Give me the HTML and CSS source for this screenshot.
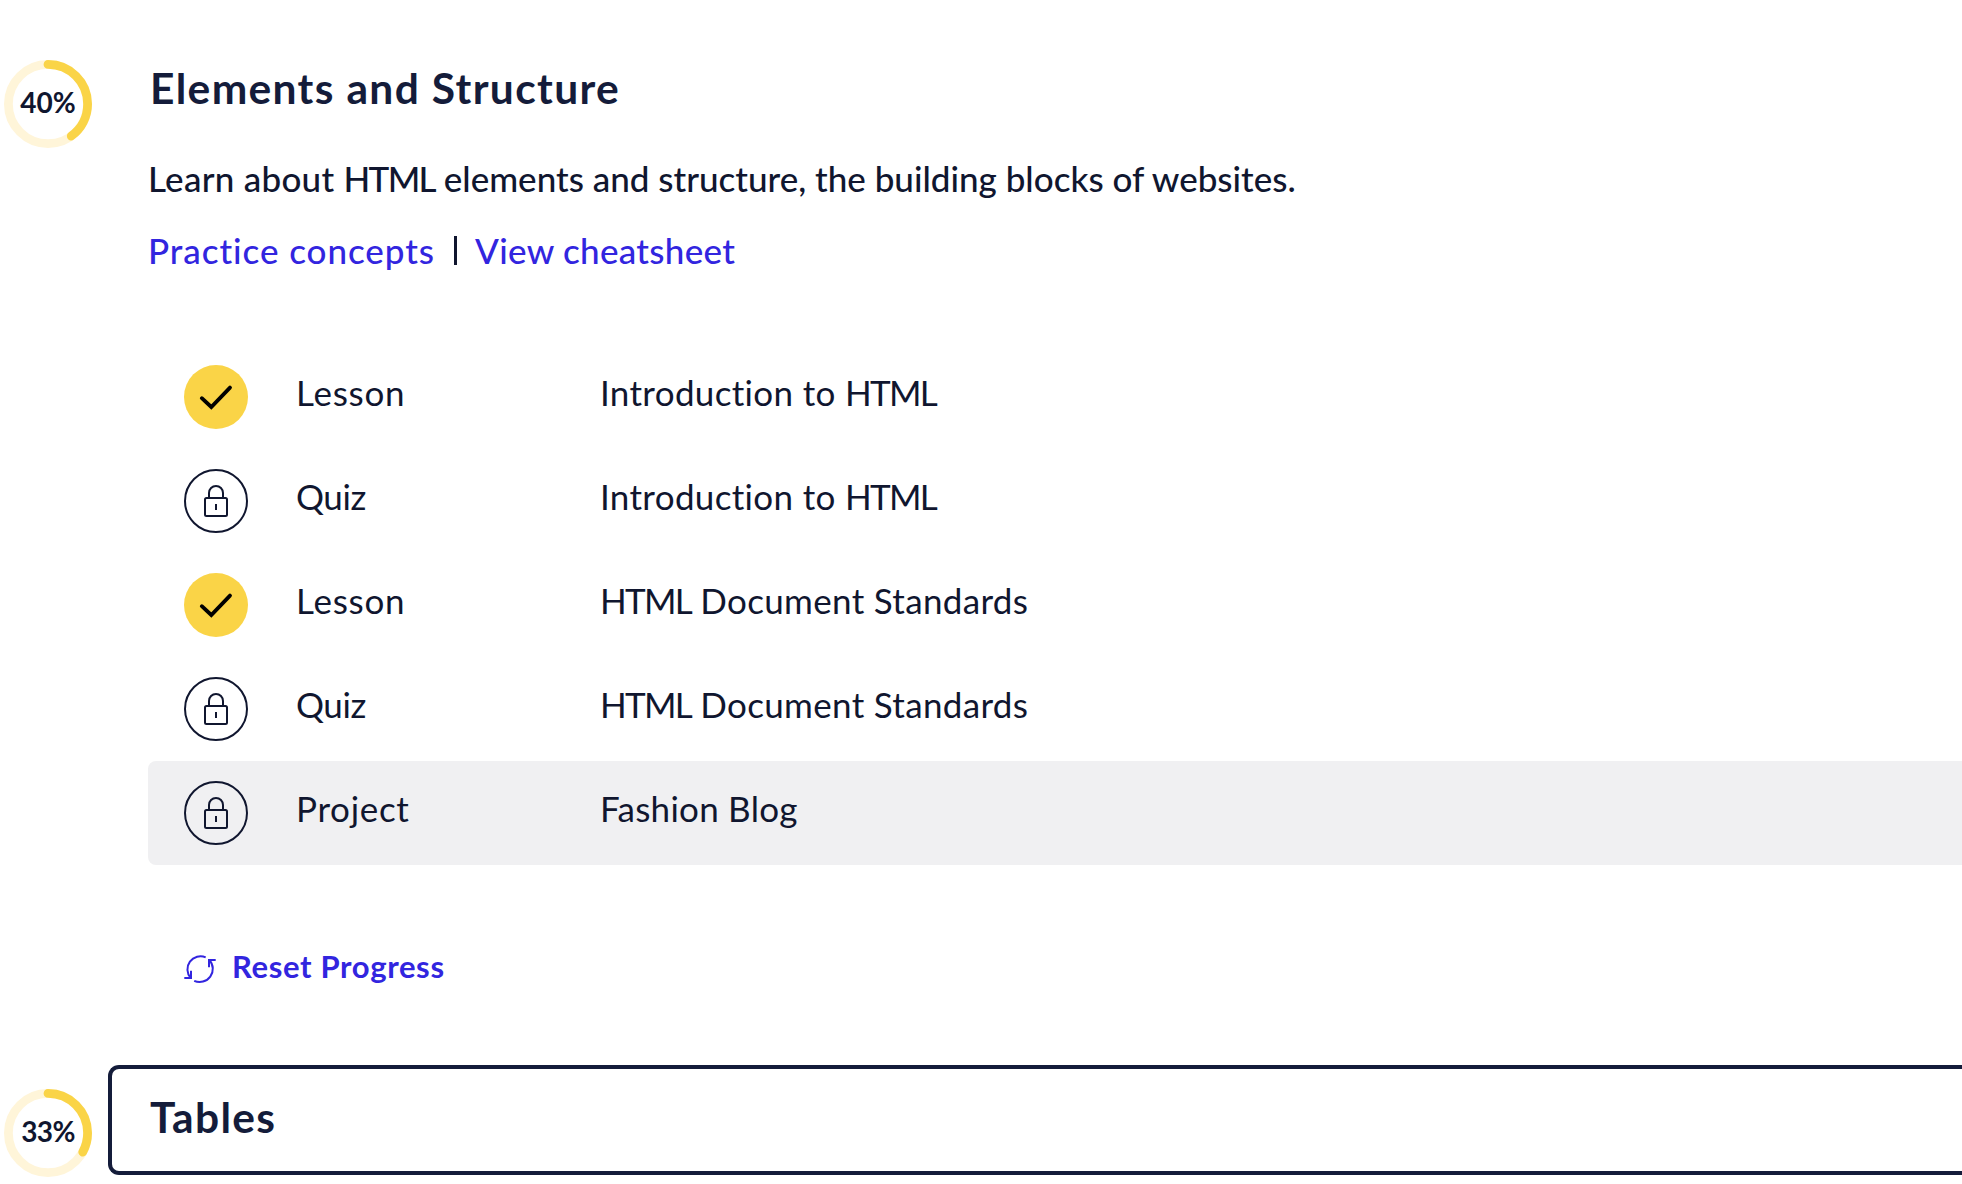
FILE: index.html
```html
<!DOCTYPE html>
<html lang="en">
<head>
<meta charset="utf-8">
<title>Learn HTML</title>
<link rel="stylesheet" href="styles.css">
</head>
<body>
<svg class="sprite" aria-hidden="true">
  <symbol id="check" viewBox="0 0 64 64">
    <circle cx="32" cy="32" r="32" fill="#fad447"/>
    <path d="M17.8 33.2 27.3 42 46 22.6" fill="none" stroke="#000" stroke-width="3.8" stroke-linecap="round" stroke-linejoin="miter"/>
  </symbol>
  <symbol id="lock" viewBox="0 0 64 64">
    <g fill="none" stroke="#10162f" stroke-width="2">
      <circle cx="32" cy="32" r="31"/>
      <rect x="21" y="29" width="22" height="18" rx="1.5"/>
      <path d="M25 29v-5a7 7 0 0 1 14 0v5M32 35v6"/>
    </g>
  </symbol>
</svg>

<main class="syllabus">
  <section class="module">
    <div class="progress">
      <svg class="ring" viewBox="0 0 88 88">
        <circle class="track" cx="44" cy="44" r="39.6"/>
        <circle class="value" cx="44" cy="44" r="39.6" pathLength="100" stroke-dasharray="40 100" transform="rotate(-90 44 44)"/>
      </svg>
      <span class="percent">40%</span>
    </div>
    <div class="content">
      <h2 class="title">Elements and Structure</h2>
      <p class="summary"><span class="lead">Learn about </span><span class="caps">HTML</span> elements and structure, the building blocks of websites.</p>
      <nav class="links"><a class="practice" href="#">Practice concepts</a><span class="divider"></span><a class="cheatsheet" href="#">View cheatsheet</a></nav>
      <ul class="items">
        <li class="item"><svg class="status"><use href="#check"/></svg><span class="kind lesson">Lesson</span><span class="name">Introduction to <span class="caps">HTML</span></span></li>
        <li class="item"><svg class="status"><use href="#lock"/></svg><span class="kind quiz">Quiz</span><span class="name">Introduction to <span class="caps">HTML</span></span></li>
        <li class="item"><svg class="status"><use href="#check"/></svg><span class="kind lesson">Lesson</span><span class="name"><span class="caps">HTML</span> Document Standards</span></li>
        <li class="item"><svg class="status"><use href="#lock"/></svg><span class="kind quiz">Quiz</span><span class="name"><span class="caps">HTML</span> Document Standards</span></li>
        <li class="item active"><svg class="status"><use href="#lock"/></svg><span class="kind project">Project</span><span class="name blog">Fashion Blog</span></li>
      </ul>
      <a class="reset" href="#">
        <svg class="reset-icon" viewBox="0 0 32 32"><path d="M21.7 4.3A13.1 13.1 0 0 0 6.7 25M.3 25H7v-7.2M10.2 27.8A13.1 13.1 0 0 0 25.3 7M31.7 7H25v7.2"/></svg>
        <span>Reset Progress</span>
      </a>
    </div>
  </section>

  <section class="module collapsed">
    <div class="progress">
      <svg class="ring" viewBox="0 0 88 88">
        <circle class="track" cx="44" cy="44" r="39.6"/>
        <circle class="value" cx="44" cy="44" r="39.6" pathLength="100" stroke-dasharray="33 100" transform="rotate(-90 44 44)"/>
      </svg>
      <span class="percent third">33%</span>
    </div>
    <div class="panel"><h2 class="title tables">Tables</h2></div>
  </section>
</main>
</body>
</html>
```
FILE: styles.css
```css
* { box-sizing: border-box; }
body {
  margin: 0;
  background: #fff;
  color: #10162f;
  font: 400 35px/56px Lato, "Open Sans", sans-serif;
  font-variant-ligatures: none;
  overflow: hidden;
}
h2, p, ul { margin: 0; padding: 0; }
a { color: #3225df; text-decoration: none; }
.sprite { display: none; }
.syllabus { height: 1184px; padding: 60px 0 0 4px; overflow: hidden; }

.module { display: flex; }
.progress { display: grid; flex: none; width: 88px; height: 88px; place-items: center; }
.progress > * { grid-area: 1 / 1; }
.ring { width: 88px; height: 88px; fill: none; stroke-width: 8.8; }
.track { stroke: #fff5d9; }
.value { stroke: #fad447; stroke-linecap: round; }
.percent { padding-bottom: 4px; font-size: 28px; font-weight: 700; line-height: 34px; }
.third { letter-spacing: -0.7px; }

.content { flex: 1; padding: 2px 0 0 56px; }
.title { padding-left: 2px; color: #141c3a; font-size: 42.5px; font-weight: 700; line-height: 52px; letter-spacing: 1.34px; }
.summary { margin-top: 36px; font-weight: 500; }
.lead { letter-spacing: 0.27px; }
.caps { letter-spacing: -1.7px; }
.links { display: flex; align-items: center; margin-top: 16px; font-weight: 500; }
.practice { letter-spacing: 0.95px; }
.divider { width: 3px; height: 29px; margin: 0 18px 0 19px; background: #10162f; }
.cheatsheet { letter-spacing: 0.3px; }

.items { margin-top: 67px; list-style: none; }
.item { display: grid; grid-template-columns: 64px 256px 1fr; column-gap: 48px; align-items: center; height: 104px; padding-left: 36px; }
.active { background: #f0f0f2; border-radius: 8px 0 0 8px; }
.status { width: 64px; height: 64px; }
.kind, .name { padding-bottom: 10px; }
.name { letter-spacing: 0.33px; }
.lesson { letter-spacing: 0.75px; }
.quiz { letter-spacing: -0.4px; }
.project { letter-spacing: 0.7px; }
.name.blog { letter-spacing: 0.25px; }

.reset { display: flex; width: fit-content; gap: 16px; margin: 81px 0 0 36px; font-size: 31px; font-weight: 700; line-height: 40px; letter-spacing: 0.65px; }
.reset-icon { width: 32px; height: 32px; margin-top: 7px; overflow: visible; fill: none; stroke: #3225df; stroke-width: 2; }

.collapsed { align-items: flex-start; margin-top: 79px; }
.collapsed .progress { margin-top: 24px; }
.panel { flex: 1; height: 110px; margin-left: 16px; padding: 22px 0 0 36px; border: 4px solid #141c3a; border-right: 0; border-radius: 11px 0 0 11px; }
.tables { letter-spacing: 1.3px; }
```
